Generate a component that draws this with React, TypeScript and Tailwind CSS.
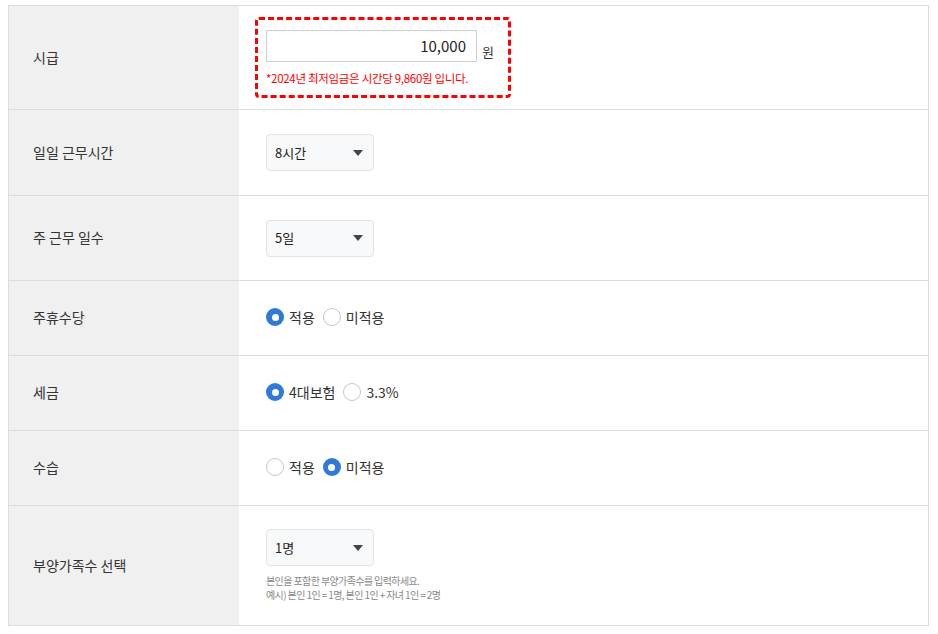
import React from 'react';

const font = { fontFamily: '"Noto Sans CJK KR", "Noto Sans", sans-serif' };

function Row({ label, h, children }: { label: string; h: string; children: React.ReactNode }) {
  return (
    <div className={`flex border-b border-[#dcdcdc] ${h}`}>
      <div className="w-[230px] shrink-0 bg-[#f0f0f0] flex items-center pl-[24px] pb-[1px] text-[14px] text-[#333]">
        {label}
      </div>
      <div className="flex-1 flex flex-col justify-center pl-[27px]">{children}</div>
    </div>
  );
}

function Select({ value }: { value: string }) {
  return (
    <div className="w-[108px] h-[37px] rounded-[4px] border border-[#e3e3e3] bg-[#f8f9fa] flex items-center justify-between pl-[8px] pr-[10px] text-[13px] text-[#222]">
      <span>{value}</span>
      <svg width="10" height="6" viewBox="0 0 10 6">
        <path d="M0 0h10L5 6z" fill="#444" />
      </svg>
    </div>
  );
}

function Radio({ checked, label }: { checked: boolean; label: string }) {
  return (
    <label className="flex items-center gap-[5px] text-[14px] text-[#333]">
      {checked ? (
        <span className="w-[18px] h-[18px] rounded-full bg-[#2f7ad6] flex items-center justify-center">
          <span className="w-[7px] h-[7px] rounded-full bg-white" />
        </span>
      ) : (
        <span className="w-[18px] h-[18px] rounded-full border border-[#c8c8c8] bg-white" />
      )}
      <span>{label}</span>
    </label>
  );
}

export default function App() {
  return (
    <div className="bg-white min-h-screen pt-[5px] pl-[8px] w-[938px]" style={font}>
      <div className="w-[921px] border-t border-l border-r border-[#dcdcdc]">
        <Row label="시급" h="h-[104px]">
          <div className="w-[256px] h-[81px] border-[3px] border-dashed border-[#ff0000] rounded-[4px] pl-[8px] pt-[10px] -ml-[11px]">
            <div className="flex items-end gap-[5px]">
              <div className="w-[211px] h-[32px] border border-[#cfcfcf] flex items-center justify-end pr-[10px] text-[15px] text-[#222]">
                10,000
              </div>
              <span className="text-[13px] text-[#333] mb-[1px]">원</span>
            </div>
            <div className="mt-[8px] text-[11.5px] text-[#ff0000] tracking-[-0.3px]">
              *2024년 최저임금은 시간당 9,860원 입니다.
            </div>
          </div>
        </Row>
        <Row label="일일 근무시간" h="h-[86px]">
          <Select value="8시간" />
        </Row>
        <Row label="주 근무 일수" h="h-[85px]">
          <Select value="5일" />
        </Row>
        <Row label="주휴수당" h="h-[75px]">
          <div className="flex items-center gap-[8px] -mt-[2px]">
            <Radio checked label="적용" />
            <Radio checked={false} label="미적용" />
          </div>
        </Row>
        <Row label="세금" h="h-[75px]">
          <div className="flex items-center gap-[8px] -mt-[2px]">
            <Radio checked label="4대보험" />
            <Radio checked={false} label="3.3%" />
          </div>
        </Row>
        <Row label="수습" h="h-[75px]">
          <div className="flex items-center gap-[8px] -mt-[2px]">
            <Radio checked={false} label="적용" />
            <Radio checked label="미적용" />
          </div>
        </Row>
        <Row label="부양가족수 선택" h="h-[120px]">
          <Select value="1명" />
          <div className="mt-[8px] text-[10px] leading-[14px] text-[#888] tracking-[-0.6px]">
            <p>본인을 포함한 부양가족수를 입력하세요.</p>
            <p>예시) 본인 1인 = 1명, 본인 1인 + 자녀 1인 = 2명</p>
          </div>
        </Row>
      </div>
    </div>
  );
}
